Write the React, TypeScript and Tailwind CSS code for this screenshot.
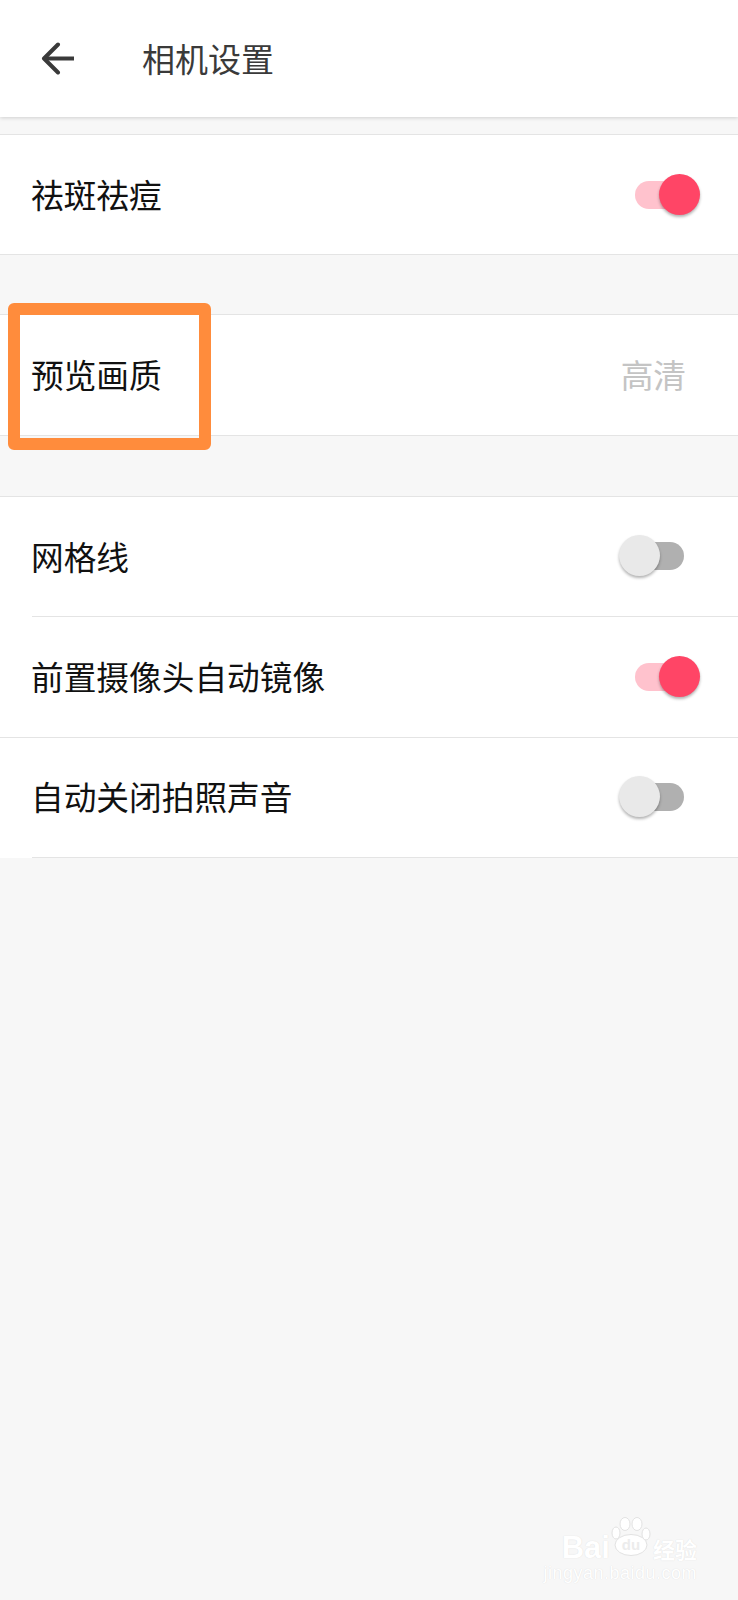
const cjk = { fontFamily: '"Noto Sans CJK SC", "Noto Sans", sans-serif' };
const latin = { fontFamily: '"Liberation Sans", sans-serif' };

function Toggle({ on }: { on: boolean }) {
  if (on) {
    return (
      <div className="relative mr-[38px] h-[42px] w-[65px] shrink-0">
        <div className="absolute left-0 top-[7px] h-[28px] w-[50px] rounded-full bg-[#ffc2cd]" />
        <div className="absolute right-0 top-0 h-[41px] w-[41px] rounded-full bg-[#ff4566] shadow-[0_2px_3px_rgba(0,0,0,0.3)]" />
      </div>
    );
  }
  return (
    <div className="relative mr-[54px] h-[42px] w-[65px] shrink-0">
      <div className="absolute right-0 top-[7px] h-[28px] w-[50px] rounded-full bg-[#b0b0b0]" />
      <div className="absolute left-0 top-0 h-[41px] w-[41px] rounded-full bg-[#e9e9e9] shadow-[0_2px_3px_rgba(0,0,0,0.3)]" />
    </div>
  );
}

function Row({ label, children, inset }: { label: string; children?: React.ReactNode; inset?: boolean }) {
  return (
    <div className="bg-white">
      <div className="flex h-[119.4px] items-center justify-between pl-[31px]">
        <span className="pb-[1px] text-[32.7px] leading-none text-[#111]">{label}</span>
        {children}
      </div>
      <div className={inset ? "ml-[32px] h-px bg-[#e4e4e4]" : "h-px bg-[#e4e4e4]"} />
    </div>
  );
}

function BackArrow() {
  return (
    <svg width="33" height="33" viewBox="0 0 33 33" fill="none" stroke="#3a3a3a" strokeWidth="4" className="ml-[41px]">
      <path d="M3 16.5H33" />
      <path d="M17 2.5L3 16.5L17 30.5" strokeLinecap="round" strokeLinejoin="round" />
    </svg>
  );
}

function Watermark() {
  return (
    <div className="absolute bottom-[18px] right-[41px] flex flex-col items-end text-white">
      <div className="flex items-end">
        <span className="text-[31px] font-bold leading-[24px] [text-shadow:0_0_1px_#d8d8d8]" style={latin}>
          Bai
        </span>
        <svg width="40" height="40" viewBox="0 0 40 40" fill="#ffffff" stroke="#e2e2e2" strokeWidth="1" className="mb-[3px] ml-[1px]">
          <ellipse cx="14" cy="7" rx="5" ry="6.5" />
          <ellipse cx="26" cy="7" rx="5" ry="6.5" />
          <ellipse cx="5" cy="16" rx="4" ry="6" />
          <ellipse cx="35" cy="17" rx="4" ry="6" />
          <ellipse cx="20" cy="28" rx="16" ry="10.5" />
          <text x="20" y="33" textAnchor="middle" fontSize="15" fontWeight="700" fontFamily="Liberation Sans" fill="#ececec" stroke="none">
            du
          </text>
        </svg>
        <span className="ml-[2px] text-[22px] font-bold leading-[24px] [text-shadow:0_0_1px_#d8d8d8]">经验</span>
      </div>
      <span className="mt-[4px] text-[18px] leading-none tracking-[0.5px] [text-shadow:0_0_1px_#d8d8d8]" style={latin}>
        jingyan.baidu.com
      </span>
    </div>
  );
}

export default function App() {
  return (
    <div className="relative flex h-[1600px] w-[738px] flex-col overflow-hidden bg-[#f7f7f7]" style={cjk}>
      <header className="z-10 flex h-[117px] shrink-0 items-center bg-white shadow-[0_1px_4px_rgba(0,0,0,0.16)]">
        <BackArrow />
        <h1 className="ml-[68px] text-[33px] font-normal leading-none text-[#3a3a3a]">相机设置</h1>
      </header>

      <section className="mt-[17px] border-t border-[#e4e4e4]">
        <Row label="祛斑祛痘">
          <Toggle on />
        </Row>
      </section>

      <section className="mt-[59px] border-t border-[#e4e4e4]">
        <Row label="预览画质">
          <span className="mr-[52px] pb-[1px] text-[32.7px] leading-none text-[#c4c4c4]">高清</span>
        </Row>
      </section>

      <section className="mt-[60px] border-t border-[#e4e4e4]">
        <Row label="网格线" inset>
          <Toggle on={false} />
        </Row>
        <Row label="前置摄像头自动镜像">
          <Toggle on />
        </Row>
        <Row label="自动关闭拍照声音" inset>
          <Toggle on={false} />
        </Row>
      </section>

      {/* annotation box drawn over the screenshot */}
      <div className="absolute left-[8px] top-[303px] h-[147px] w-[203px] rounded-[6px] border-[12px] border-[#ff8c3c]" />
      <Watermark />
    </div>
  );
}
